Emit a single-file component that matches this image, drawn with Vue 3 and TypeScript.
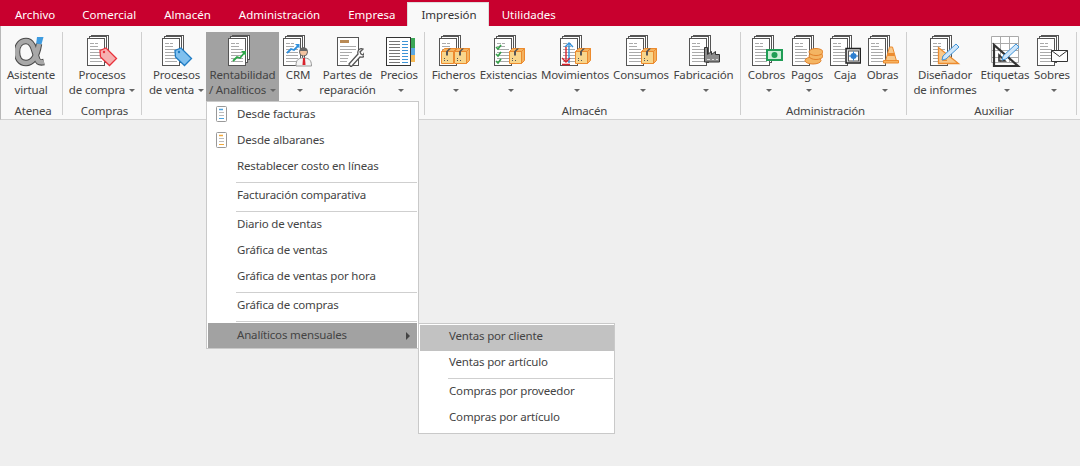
<template>
  <div class="app">
    <div class="tabs">
      <div
        v-for="tab in tabs"
        :key="tab"
        class="tab"
        :class="{ active: tab === 'Impresión', file: tab === 'Archivo' }"
      >
        {{ tab }}
      </div>
    </div>

    <div class="ribbon">
      <section v-for="group in groups" :key="group.label" class="group" :style="{ width: group.width + 'px', paddingLeft: group.pad + 'px' }">
        <div class="buttons">
          <div
            v-for="btn in group.buttons"
            :key="btn.lines[0]"
            class="rbtn"
            :class="{ open: btn.open }"
            :style="{ width: btn.width + 'px' }"
          >
            <svg class="ico" viewBox="0 0 32 32" width="32" height="32" v-html="icons[btn.icon]"></svg>
            <span class="line">{{ btn.lines[0] }}</span>
            <span class="line">{{ btn.lines[1] }}<i v-if="btn.caret" class="caret"></i></span>
          </div>
        </div>
        <div class="group-label">{{ group.label }}</div>
      </section>
    </div>

    <div class="menu">
      <template v-for="(item, i) in menu" :key="i">
        <div v-if="item === '-'" class="sep"></div>
        <div v-else class="item" :class="{ hot: item === 'Analíticos mensuales' }">
          <svg v-if="i < 2" class="mini" viewBox="0 0 12 16" width="12" height="16" v-html="i === 0 ? miniBlue : miniOrange"></svg>
          {{ item }}
          <i v-if="item === 'Analíticos mensuales'" class="arrow"></i>
        </div>
      </template>

      <div class="submenu">
        <template v-for="(item, i) in submenu" :key="i">
          <div v-if="item === '-'" class="sep"></div>
          <div v-else class="item" :class="{ sel: i === 0 }">{{ item }}</div>
        </template>
      </div>
    </div>
  </div>
</template>

<script setup lang="ts">
interface RibbonButton {
  lines: [string, string]
  icon: string
  width: number
  caret?: boolean
  open?: boolean
}

interface RibbonGroup {
  label: string
  width: number
  pad: number
  buttons: RibbonButton[]
}

const tabs = ['Archivo', 'Comercial', 'Almacén', 'Administración', 'Empresa', 'Impresión', 'Utilidades']

const doc =
  '<g fill="#fff" stroke="#555"><rect x="5.5" y=".5" width="17" height="24"/><rect x="3.5" y="1.5" width="17" height="26"/><rect x="1.5" y="3.5" width="17" height="27"/></g>' +
  '<path d="M4 8.5h4M9 8.5h3M4 11.5h8M4 14.5h12M4 17.5h12M4 20.5h12M4 23.5h12M4 26.5h12" stroke="#aaa" fill="none"/>'

const box = (x: number, y: number) =>
  `<g transform="translate(${x} ${y})"><path d="M.5 3.5h12v12H.5z" fill="#f8d68c" stroke="#ec8b2e"/><path d="M12.5 3.5l3-3v12l-3 3zM.5 3.5l3-3h12l-3 3z" fill="#f3b25f" stroke="#ec8b2e"/><path d="M5 3.5l3-3h2l-3 3v4H5z" fill="#555"/><path d="M3 12.500h1M6 12.500h1M3 10.500h1" stroke="#555"/></g>`

const tag = (fill: string, line: string) =>
  `<path d="M14 15.5l6-2.5 10.5 10.5-7 7L14.500 22z" fill="${fill}" stroke="${line}" stroke-width="1.300"/><circle cx="18" cy="17" r="1.200" fill="${line}"/>`

const pencil = '<path d="M13 25l1-4 13-12 3 3-13 12z" fill="#cfe6fa" stroke="#3f94d8"/>'

const alphaPath = 'M27 9c-2 12-6 19-13 19C8 28 5 23 5 17 5 10 9 6 14 6c7 0 8 9 11 18 1 3 3 4 7 3'

const icons: Record<string, string> = {
  alpha:
    '<g transform="translate(-3 0)"><path d="M25 2h6.500L27 18h-4z" fill="#3f9ce0"/>' +
    `<path d="${alphaPath}" fill="none" stroke="#4a4a4a" stroke-width="6.500"/>` +
    `<path d="${alphaPath}" fill="none" stroke="#a8a8a8" stroke-width="4.500"/></g>`,
  tagRed: doc + tag('#f6b0b0', '#e8323c'),
  tagBlue: doc + tag('#80c0ee', '#1f7cc4'),
  chart: doc + '<path d="M6 26l4-4 3 1 5-6" fill="none" stroke="#2fa84a" stroke-width="1.800"/><path d="M14 16h5v5z" fill="#2fa84a"/>',
  crm:
    doc +
    '<path d="M5 18l4-4 3 1 4-4" fill="none" stroke="#2f8fdc" stroke-width="1.800"/><path d="M13 9h4.500v4.500z" fill="#2f8fdc"/>' +
    '<circle cx="21.500" cy="17" r="4" fill="#f2c3a0" stroke="#666"/><path d="M17.500 16c0-5 8-5 8 0z" fill="#666"/><path d="M14 31c0-7 3-8 7.500-8s8 1 8 8z" fill="#f4f4f4" stroke="#999"/><path d="M21 23h2l.5 7h-3z" fill="#d8222c"/>',
  repair:
    '<rect x="5.500" y="2.500" width="21" height="28" fill="#fff" stroke="#555"/><rect x="8" y="5" width="9" height="3" fill="#b98a55"/>' +
    '<path d="M8 11.500h16M8 14.500h16M8 17.500h12M8 20.500h9M8 23.500h8M8 26.500h7" stroke="#aaa"/>' +
    '<path d="M17 29l9-10c-1-4 2-6 5-5l-3 3 1 2 2 1 2-3c1 3-1 6-5 5l-9 10z" fill="#fff" stroke="#555" stroke-width="1.300"/>',
  prices:
    '<path d="M27 3h5v10h-5z" fill="#3aa655"/><path d="M27 13h5v7h-5z" fill="#5aa8e0"/><path d="M27 20h5v7h-5z" fill="#f6b955"/>' +
    '<rect x="3.500" y="2.500" width="24" height="28" fill="#fff" stroke="#333"/>' +
    '<path d="M6 6.500h11M6 9.500h11M6 12.500h11M6 15.500h11M6 18.500h11M6 21.500h11M6 24.500h11M6 27.500h11" stroke="#777"/><path d="M19 6.500h6M19 9.500h6M19 12.500h6M19 15.500h6M19 18.500h6M19 21.500h6M19 24.500h6M19 27.500h6" stroke="#3d94d6"/>',
  files: doc + box(3, 13) + box(16, 13),
  stock:
    doc +
    '<path d="M3 12l2 2 3-4M3 19l2 2 3-4M3 26l2 2 3-4" fill="none" stroke="#35a04a" stroke-width="1.600"/>' +
    box(16, 13),
  moves:
    doc +
    '<path d="M10 28V9" stroke="#2f8fdc" stroke-width="1.400"/><path d="M6 12l4-4 4 4" fill="none" stroke="#2f8fdc" stroke-width="1.400"/><path d="M7 12v14" stroke="#d8222c" stroke-width="1.400"/><path d="M3 23l4 4 4-4M3 29.500h8" fill="none" stroke="#d8222c" stroke-width="1.400"/>' +
    box(16, 13),
  use: doc + box(16, 13),
  factory: doc + '<path d="M16.500 12.500h3v7l4-3v3l4-3v3h4v7.500h-15z" fill="#8d8d8d" stroke="#333"/><path d="M19 24.500h3M24 24.500h2M28 24.500h2" stroke="#ddd"/>',
  cash: doc + '<rect x="15" y="14" width="17" height="12" fill="#1f9d55"/><rect x="17" y="16" width="13" height="8" fill="#cdeed8"/><circle cx="23.500" cy="20" r="3" fill="#1f9d55"/>',
  coins:
    doc +
    '<g fill="#f4b563" stroke="#e2812a"><ellipse cx="22" cy="25.500" rx="8" ry="3.500"/><ellipse cx="25" cy="21" rx="7" ry="3.500"/><ellipse cx="25" cy="17" rx="7" ry="3.500"/></g>',
  safe:
    doc +
    '<rect x="17" y="13.500" width="14.500" height="14.500" fill="#ddd" stroke="#222" stroke-width="1.500"/><rect x="19.500" y="16" width="10" height="10" fill="#fff" stroke="#555"/><circle cx="24.500" cy="21" r="3" fill="#2f7fd0"/><path d="M24.500 16.500v9M20 21h9" stroke="#2f7fd0"/>',
  cone: doc + '<path d="M22.500 12h3l4 14h-11z" fill="#f8c98c" stroke="#ec8b2e"/><path d="M16.500 25.500h15v2.500h-15z" fill="#f6b25f" stroke="#ec8b2e"/><path d="M21 18h6l1 3h-8z" fill="#ec8b2e"/>',
  designer:
    doc +
    '<path d="M9.500 12.500v16h20z" fill="#f8c88a" stroke="#ec8b2e" stroke-width="1.300"/><path d="M13.500 21.500v4h4.500z" fill="#fff" stroke="#ec8b2e"/>' +
    pencil,
  labels:
    '<path d="M2.500 1.500h27v26h-27zM2.500 8.500h27M2.500 15.500h27M2.500 22.500h27M11.500 1.500v26M20.500 1.500v26" fill="#fff" stroke="#aaa"/>' +
    '<path d="M5 10v21h24z" fill="none" stroke="#333" stroke-width="2.200"/><path d="M10 20v6h6z" fill="none" stroke="#333" stroke-width="1.600"/>' +
    pencil,
  envelope: doc + '<path d="M15.500 15.500h16v11h-16z" fill="#fff" stroke="#333"/><path d="M15.500 15.500l8 6 8-6" fill="none" stroke="#333"/>'
}

const miniLines = (color: string) =>
  `<rect x=".5" y=".5" width="10" height="15" rx="1" fill="#fff" stroke="#999"/><path d="M3 3.500h4" stroke="${color}" stroke-width="1.500"/><path d="M3 6.500h5M3 9.500h5" stroke="#bbb"/><path d="M3 12.500h5" stroke="${color}"/>`

const miniBlue = miniLines('#4aa3e0')
const miniOrange = miniLines('#f2a83a')

const groups: RibbonGroup[] = [
  {
    label: 'Atenea',
    width: 62,
    pad: 3,
    buttons: [{ lines: ['Asistente', 'virtual'], icon: 'alpha', width: 54 }]
  },
  {
    label: 'Compras',
    width: 79,
    pad: 5,
    buttons: [{ lines: ['Procesos', 'de compra'], icon: 'tagRed', width: 68, caret: true }]
  },
  {
    label: '',
    width: 283,
    pad: 5,
    buttons: [
      { lines: ['Procesos', 'de venta'], icon: 'tagBlue', width: 59, caret: true },
      { lines: ['Rentabilidad', '/ Analíticos'], icon: 'chart', width: 73, caret: true, open: true },
      { lines: ['CRM', ''], icon: 'crm', width: 38, caret: true },
      { lines: ['Partes de', 'reparación'], icon: 'repair', width: 61 },
      { lines: ['Precios', ''], icon: 'prices', width: 42, caret: true }
    ]
  },
  {
    label: 'Almacén',
    width: 316,
    pad: 4,
    buttons: [
      { lines: ['Ficheros', ''], icon: 'files', width: 49, caret: true },
      { lines: ['Existencias', ''], icon: 'stock', width: 61, caret: true },
      { lines: ['Movimientos', ''], icon: 'moves', width: 72, caret: true },
      { lines: ['Consumos', ''], icon: 'use', width: 60, caret: true },
      { lines: ['Fabricación', ''], icon: 'factory', width: 65, caret: true }
    ]
  },
  {
    label: 'Administración',
    width: 166,
    pad: 4,
    buttons: [
      { lines: ['Cobros', ''], icon: 'cash', width: 43, caret: true },
      { lines: ['Pagos', ''], icon: 'coins', width: 38, caret: true },
      { lines: ['Caja', ''], icon: 'safe', width: 38 },
      { lines: ['Obras', ''], icon: 'cone', width: 37, caret: true }
    ]
  },
  {
    label: 'Auxiliar',
    width: 170,
    pad: 5,
    buttons: [
      { lines: ['Diseñador', 'de informes'], icon: 'designer', width: 66 },
      { lines: ['Etiquetas', ''], icon: 'labels', width: 54, caret: true },
      { lines: ['Sobres', ''], icon: 'envelope', width: 40, caret: true }
    ]
  }
]

const menu = [
  'Desde facturas',
  'Desde albaranes',
  'Restablecer costo en líneas',
  '-',
  'Facturación comparativa',
  '-',
  'Diario de ventas',
  'Gráfica de ventas',
  'Gráfica de ventas por hora',
  '-',
  'Gráfica de compras',
  '-',
  'Analíticos mensuales'
]

const submenu = ['Ventas por cliente', 'Ventas por artículo', '-', 'Compras por proveedor', 'Compras por artículo']
</script>

<style scoped>
.app {
  position: relative;
  width: 1080px;
  height: 466px;
  overflow: hidden;
  background: #efefef;
  font-family: "Noto Sans", "Open Sans", sans-serif;
  font-size: 11.5px;
  letter-spacing: -0.17px;
  color: #444;
}

.tabs {
  display: flex;
  height: 26px;
  background: #c8002e;
  color: #fff;
  letter-spacing: 0;
}

.tab {
  padding: 0 14px;
  line-height: 29px;
  height: 26px;
}

.tab.file {
  padding: 0 13px 0 15px;
}

.tab.active {
  margin: 2px -1px 0 -2px;
  padding: 0 12px 0 14px;
  height: 24px;
  line-height: 25px;
  background: #f9f9f9;
  color: #333;
  box-shadow: inset 1px 0 #ddd, inset -1px 0 #ddd, inset 0 1px #ddd;
}

.ribbon {
  display: flex;
  height: 94px;
  padding-top: 6px;
  background: #f9f9f9;
  border-bottom: 1px solid #d2d2d2;
  border-left: 1px solid #b8b8b8;
  box-sizing: border-box;
}

.group {
  height: 83px;
  box-sizing: border-box;
  border-right: 1px solid #cfcfcf;
}

.buttons {
  display: flex;
  height: 69px;
}

.rbtn {
  display: flex;
  flex-direction: column;
  align-items: center;
  padding-top: 3px;
  box-sizing: border-box;
  flex: none;
}

.rbtn.open {
  background: #a2a2a2;
}

.ico {
  display: block;
  flex: none;
}

.line {
  height: 15px;
  line-height: 15px;
  white-space: nowrap;
}

.caret {
  display: inline-block;
  margin-left: 4px;
  vertical-align: 2px;
  border-left: 3px solid transparent;
  border-right: 3px solid transparent;
  border-top: 3px solid #666;
}

.group-label {
  height: 14px;
  line-height: 14px;
  margin-top: 3px;
  text-align: center;
  white-space: nowrap;
}

.menu {
  position: absolute;
  left: 206px;
  top: 101px;
  width: 213px;
  height: 248px;
  box-sizing: border-box;
  background: #fff;
  border: 1px solid #c9c9c9;
}

.item {
  position: relative;
  height: 26px;
  line-height: 24px;
  padding-left: 30px;
  white-space: nowrap;
}

.item.hot {
  height: 25px;
  margin: 1px 1px 0;
  padding-left: 29px;
  background: #a2a2a2;
}

.item.sel {
  background: #c2c2c2;
}

.sep {
  height: 1px;
  margin: 2px 1px 0 29px;
  background: #cfcfcf;
}

.mini {
  position: absolute;
  left: 9px;
  top: 4px;
}

.arrow {
  position: absolute;
  right: 7px;
  top: 9px;
  border-top: 4px solid transparent;
  border-bottom: 4px solid transparent;
  border-left: 4px solid #444;
}

.submenu {
  position: absolute;
  left: 211px;
  top: 221px;
  width: 197px;
  height: 111px;
  box-sizing: border-box;
  padding: 1px 0 0 1px;
  background: #fff;
  border: 1px solid #c9c9c9;
}

.submenu .item {
  line-height: 22px;
  padding-left: 29px;
}

.submenu .sep {
  margin: 1px 1px 1px 28px;
}
</style>
